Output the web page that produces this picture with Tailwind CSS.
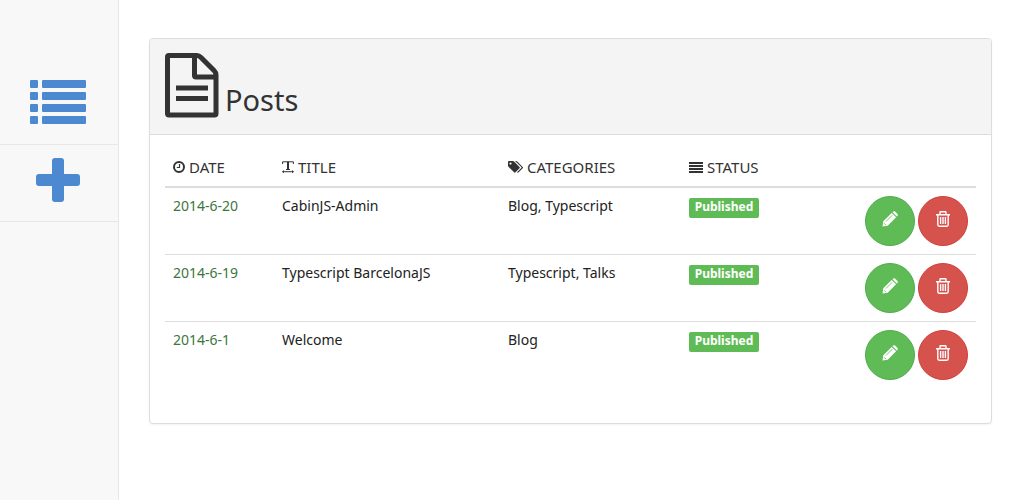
<!DOCTYPE html>
<html lang="en">
<head>
<meta charset="utf-8">
<meta name="viewport" content="width=device-width, initial-scale=1">
<title>Posts</title>
<script src="https://cdn.jsdelivr.net/npm/@tailwindcss/browser@4"></script>
</head>
<body class="flex min-h-screen bg-white font-['Noto_Sans',sans-serif] text-sm text-[#222]">
<svg class="hidden" aria-hidden="true">
  <symbol id="pencil" viewBox="0 0 16 16">
    <path fill="currentColor" d="M.5 15.600l.8-5.400L9.700 1.900l4.400 4.400-8.400 8.400zM10.500 1.200l.6-.6q1-.9 2 0l2.300 2.300q.9 1 0 2l-.6.6z"/>
    <path fill="none" stroke="#5fbb56" stroke-width=".8" d="M4 10.500l6.300-6.300M2 12.200l2 2"/>
  </symbol>
  <symbol id="trash" viewBox="0 0 14 16">
    <path fill="none" stroke="currentColor" stroke-width="1.400" d="M0 3.700h14M4 3.400V1.500q0-.7.7-.7h4.600q.7 0 .7.700v1.900M1.800 4v9.800q0 1.400 1.400 1.400h7.600q1.400 0 1.400-1.400V4M4.600 6v7M7 6v7M9.400 6v7"/>
  </symbol>
</svg>

<nav class="w-[119px] shrink-0 border-r border-[#e7e7e7] bg-[#f8f8f8] pt-16 text-[#4c89d0]" aria-label="Main">
  <a href="#posts" aria-label="All posts" class="flex h-[81px] items-center justify-center border-b border-[#e7e7e7] pr-0.5 pb-1">
    <svg class="h-11 w-14" viewBox="0 0 56 44" fill="currentColor"><rect width="8" height="8" rx="1"/><rect x="12" width="44" height="8" rx="1"/><rect y="12" width="8" height="8" rx="1"/><rect x="12" y="12" width="44" height="8" rx="1"/><rect y="24" width="8" height="8" rx="1"/><rect x="12" y="24" width="44" height="8" rx="1"/><rect y="36" width="8" height="8" rx="1"/><rect x="12" y="36" width="44" height="8" rx="1"/></svg>
  </a>
  <a href="#new" aria-label="New post" class="flex h-[77px] items-center justify-center border-b border-[#e7e7e7] pr-0.5 pb-1.5">
    <svg class="size-11" viewBox="0 0 44 44" fill="currentColor"><rect x="16" width="12" height="44" rx="3"/><rect y="16" width="44" height="12" rx="3"/></svg>
  </a>
</nav>

<main class="min-w-0 flex-1 pt-[38px] pr-[29px] pl-[30px]">
  <section class="rounded border border-[#ddd] bg-white shadow-xs">
    <header class="flex items-end gap-1.5 rounded-t border-b border-[#ddd] bg-[#f4f4f4] px-[15px] pt-3.5 pb-4 text-[#333]">
      <svg class="h-[65px] w-[54px]" viewBox="0 0 54 65" fill="none" stroke="currentColor" stroke-width="5" stroke-linejoin="round" stroke-linecap="round" aria-hidden="true">
        <path d="M2.500 4Q2.500 2.500 4 2.500H32Q34 2.500 36 4.500L49 17.500Q51 19.500 51 22V60.500Q51 62 49.500 62H4Q2.500 62 2.500 60.500z"/>
        <path stroke-linecap="butt" d="M29.500 3V22.500Q29.500 24 31 24H51"/>
        <path stroke-linecap="butt" d="M11 35H43M11 45.500H43"/>
      </svg>
      <h1 class="pb-0.5 text-[29px] leading-8">Posts</h1>
    </header>
    <div class="px-[15px] pt-3.5 pb-[35px]">
      <table class="w-full table-fixed border-collapse text-left">
        <thead class="text-[15px] text-[#333] uppercase">
          <tr class="h-[38px] border-b-2 border-[#ddd]">
            <th class="w-[109px] px-2 font-normal"><span class="flex items-center gap-1">
              <svg class="size-3" viewBox="0 0 12 12" fill="none" stroke="currentColor" aria-hidden="true"><circle cx="6" cy="6" r="5" stroke-width="2"/><path stroke-width="1.200" d="M6.500 3v3.500H3.800"/></svg>Date</span></th>
            <th class="w-[226px] px-2 font-normal"><span class="flex items-center gap-1">
              <svg class="size-3" viewBox="0 0 12 12" fill="none" stroke="currentColor" aria-hidden="true"><path d="M.6 3V.8h10.800V3M4 8.500h4M.5 10.700h11M2 9.500L.7 10.700 2 11.800M10 9.500l1.300 1.200L10 11.800"/><path stroke-width="2" d="M6 .8v7.700"/></svg>Title</span></th>
            <th class="w-[181px] px-2 font-normal"><span class="flex items-center gap-1">
              <svg class="h-3 w-[15px]" viewBox="0 0 15 12" fill="currentColor" aria-hidden="true"><path fill-rule="evenodd" d="M0 1Q0 0 1 0h3.800q.8 0 1.500.7l5.200 5.200q.7.700 0 1.400l-4 4q-.7.700-1.400 0L.7 5.900Q0 5.200 0 4.500zM2.500 1.400a1.100 1.100 0 1 0 .01 0z"/><path d="M7 0h1q.8 0 1.500.7l5.200 5.200q.7.700 0 1.400l-4 4q-.7.700-1.400.3l-.3-.3 4.300-4.300q.4-.5 0-1z"/></svg>Categories</span></th>
            <th class="px-2 font-normal"><span class="flex items-center gap-1">
              <svg class="h-3 w-3.5" viewBox="0 0 14 12" fill="currentColor" aria-hidden="true"><path d="M0 1h14v2H0zM0 4h14v2H0zM0 7h14v2H0zM0 10h14v2H0z"/></svg>Status</span></th>
            <th class="w-[127px]" aria-label="Actions"></th>
          </tr>
        </thead>
        <tbody class="align-top">
          <tr class="h-[67px] border-b border-[#ddd]">
            <td class="px-2 pt-2"><a href="#2014-6-20" class="text-[#3c763d]">2014-6-20</a></td>
            <td class="px-2 pt-2">CabinJS-Admin</td>
            <td class="px-2 pt-2">Blog, Typescript</td>
            <td class="px-2 pt-2.5"><span class="block w-[70px] rounded-xs bg-[#5fbb56] pb-0.5 text-center text-xs leading-[18px] font-bold text-white">Published</span></td>
            <td class="px-2 pt-2"><div class="flex justify-end gap-[3px]">
              <button type="button" aria-label="Edit CabinJS-Admin" class="flex size-[50px] items-center justify-center rounded-full border border-[#4cae4c] bg-[#5fbb56] pb-1 text-white"><svg class="size-4"><use href="#pencil"/></svg></button>
              <button type="button" aria-label="Delete CabinJS-Admin" class="flex size-[50px] items-center justify-center rounded-full border border-[#d43f3a] bg-[#d5524d] pb-1 text-white"><svg class="h-4 w-3.5"><use href="#trash"/></svg></button>
            </div></td>
          </tr>
          <tr class="h-[67px] border-b border-[#ddd]">
            <td class="px-2 pt-2"><a href="#2014-6-19" class="text-[#3c763d]">2014-6-19</a></td>
            <td class="px-2 pt-2">Typescript BarcelonaJS</td>
            <td class="px-2 pt-2">Typescript, Talks</td>
            <td class="px-2 pt-2.5"><span class="block w-[70px] rounded-xs bg-[#5fbb56] pb-0.5 text-center text-xs leading-[18px] font-bold text-white">Published</span></td>
            <td class="px-2 pt-2"><div class="flex justify-end gap-[3px]">
              <button type="button" aria-label="Edit Typescript BarcelonaJS" class="flex size-[50px] items-center justify-center rounded-full border border-[#4cae4c] bg-[#5fbb56] pb-1 text-white"><svg class="size-4"><use href="#pencil"/></svg></button>
              <button type="button" aria-label="Delete Typescript BarcelonaJS" class="flex size-[50px] items-center justify-center rounded-full border border-[#d43f3a] bg-[#d5524d] pb-1 text-white"><svg class="h-4 w-3.5"><use href="#trash"/></svg></button>
            </div></td>
          </tr>
          <tr class="h-[67px]">
            <td class="px-2 pt-2"><a href="#2014-6-1" class="text-[#3c763d]">2014-6-1</a></td>
            <td class="px-2 pt-2">Welcome</td>
            <td class="px-2 pt-2">Blog</td>
            <td class="px-2 pt-2.5"><span class="block w-[70px] rounded-xs bg-[#5fbb56] pb-0.5 text-center text-xs leading-[18px] font-bold text-white">Published</span></td>
            <td class="px-2 pt-2"><div class="flex justify-end gap-[3px]">
              <button type="button" aria-label="Edit Welcome" class="flex size-[50px] items-center justify-center rounded-full border border-[#4cae4c] bg-[#5fbb56] pb-1 text-white"><svg class="size-4"><use href="#pencil"/></svg></button>
              <button type="button" aria-label="Delete Welcome" class="flex size-[50px] items-center justify-center rounded-full border border-[#d43f3a] bg-[#d5524d] pb-1 text-white"><svg class="h-4 w-3.5"><use href="#trash"/></svg></button>
            </div></td>
          </tr>
        </tbody>
      </table>
    </div>
  </section>
</main>
</body>
</html>
